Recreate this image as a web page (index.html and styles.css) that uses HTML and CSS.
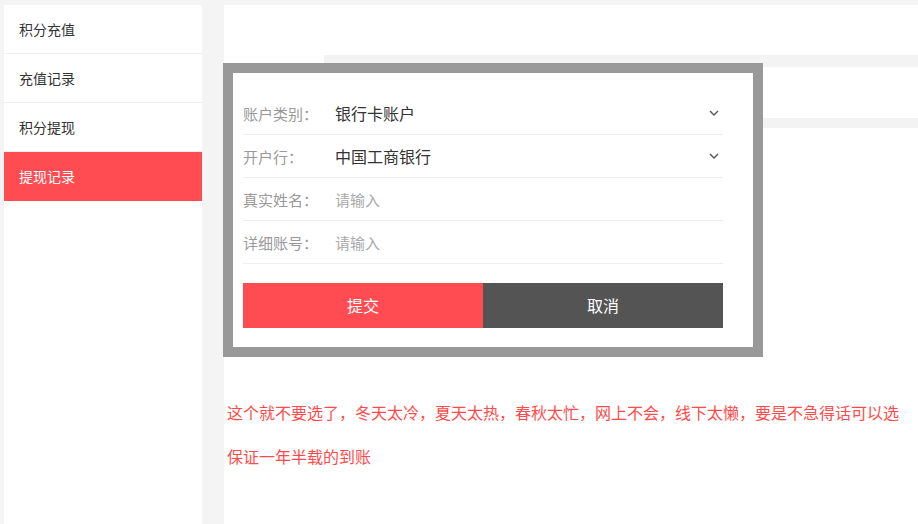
FILE: index.html
```html
<!DOCTYPE html>
<html lang="zh-CN">
<head>
    <meta charset="UTF-8">
    <meta name="viewport" content="width=device-width, initial-scale=1.0">
    <title>提现记录</title>
    <link rel="stylesheet" href="styles.css">
</head>
<body>
    <div class="page">
        <ul class="side-menu">
            <li>积分充值</li>
            <li>充值记录</li>
            <li>积分提现</li>
            <li class="active">提现记录</li>
        </ul>
        <div class="main">
            <div class="tab-strip"></div>
            <div class="tab-strip second"></div>
            <p class="notice">这个就不要选了，冬天太冷，夏天太热，春秋太忙，网上不会，线下太懒，要是不急得话可以选保证一年半载的到账</p>
        </div>
    </div>

    <!-- 提现弹窗 -->
    <div class="dialog">
        <div class="dialog-body">
            <div class="form-row">
                <span class="label">账户类别：</span>
                <span class="value">银行卡账户</span>
                <svg class="arrow" width="10" height="6" viewBox="0 0 10 6"><polyline points="1,1 5,5 9,1" fill="none" stroke="#555" stroke-width="1.4"/></svg>
            </div>
            <div class="form-row">
                <span class="label">开户行：</span>
                <span class="value">中国工商银行</span>
                <svg class="arrow" width="10" height="6" viewBox="0 0 10 6"><polyline points="1,1 5,5 9,1" fill="none" stroke="#555" stroke-width="1.4"/></svg>
            </div>
            <div class="form-row">
                <span class="label">真实姓名：</span>
                <span class="value placeholder">请输入</span>
            </div>
            <div class="form-row">
                <span class="label">详细账号：</span>
                <span class="value placeholder">请输入</span>
            </div>
            <div class="btn-group">
                <div class="btn btn-submit">提交</div>
                <div class="btn btn-cancel">取消</div>
            </div>
        </div>
    </div>
</body>
</html>
```

FILE: styles.css
```css
body {
    margin: 0;
    background-color: #f4f4f4;
    font-family: "Microsoft YaHei", "Noto Sans CJK SC", sans-serif;
    color: #333;
}

.page {
    display: flex;
    gap: 22px;
    padding: 5px 0 0 4px;
    height: calc(100vh - 5px);
}

.side-menu {
    width: 198px;
    margin: 0;
    padding: 0;
    list-style: none;
    background-color: #fff;
}
.side-menu li {
    height: 48px;
    line-height: 48px;
    padding-left: 15px;
    font-size: 14px;
    color: #333;
    border-bottom: 1px solid #eee;
}
.side-menu li.active {
    background-color: #ff4b52;
    color: #fff;
    border-bottom-color: #ff4b52;
}

.main {
    flex: 1;
    background-color: #fff;
    padding-top: 50px;
}

.tab-strip {
    height: 12px;
    margin-left: 100px;
    background-color: #f3f3f3;
}
.tab-strip.second {
    height: 10px;
    margin-top: 51px;
}

.notice {
    margin: 262px 0 0 3px;
    width: 680px;
    font-size: 16px;
    line-height: 44px;
    color: #ff4b4b;
}

.dialog {
    position: absolute;
    left: 223px;
    top: 63px;
    width: 520px;
    border: 10px solid #999;
    background-color: #fff;
}
.dialog-body {
    padding: 19px 30px 19px 10px;
}

.form-row {
    display: flex;
    align-items: center;
    height: 42px;
    border-bottom: 1px solid #eee;
}
.label {
    width: 92px;
    font-size: 15px;
    color: #999;
}
.value {
    flex: 1;
    font-size: 16px;
    color: #333;
}
.value.placeholder {
    font-size: 15px;
    color: #aaa;
}
.arrow {
    margin-right: 4px;
}

.btn-group {
    display: flex;
    margin-top: 19px;
}
.btn {
    flex: 1;
    height: 45px;
    line-height: 45px;
    text-align: center;
    font-size: 16px;
    color: #fff;
}
.btn-submit {
    background-color: #ff4b52;
}
.btn-cancel {
    background-color: #545454;
}
```
